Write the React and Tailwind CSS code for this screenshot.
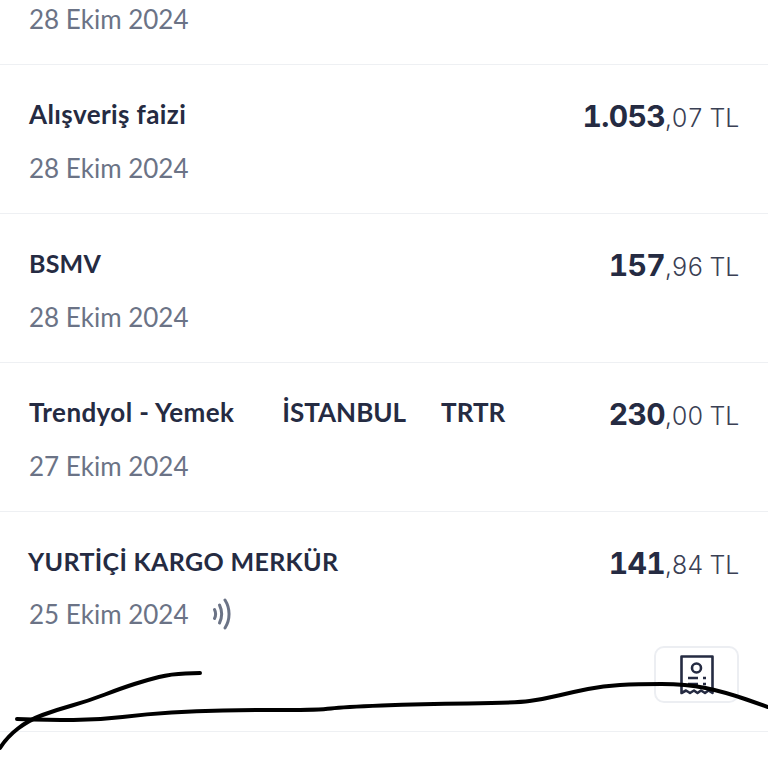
import React from "react";

const rows = [
  { title: "Alışveriş faizi", date: "28 Ekim 2024", whole: "1.053", cents: ",07 TL" },
  { title: "BSMV", date: "28 Ekim 2024", whole: "157", cents: ",96 TL" },
  { title: "Trendyol - Yemek", extra: ["İSTANBUL", "TRTR"], date: "27 Ekim 2024", whole: "230", cents: ",00 TL" },
];

const scribbleA = [[0, 748], [7, 737], [29, 720], [56, 710], [88, 701], [122, 688], [147, 680], [171, 674], [200, 673]];
const scribbleB = [[17, 719], [49, 720], [98, 720], [147, 714], [196, 711], [250, 710], [319, 710], [343, 707], [421, 704], [515, 703], [544, 699], [573, 692], [603, 686], [637, 684], [686, 684], [725, 692], [768, 707]];

// smooth a list of points with quadratic segments through the midpoints
function smooth(points) {
  let d = `M${points[0][0]} ${points[0][1]}`;
  for (let i = 1; i < points.length - 1; i++) {
    const mx = (points[i][0] + points[i + 1][0]) / 2;
    const my = (points[i][1] + points[i + 1][1]) / 2;
    d += `Q${points[i][0]} ${points[i][1]} ${mx} ${my}`;
  }
  const last = points[points.length - 1];
  return `${d}L${last[0]} ${last[1]}`;
}

function Amount({ whole, cents }) {
  return (
    <div className="flex items-baseline text-[#252b42] font-['Inter',sans-serif] tabular-nums">
      <span className="text-[30px] font-bold leading-[38px] tracking-[-0.6px]">{whole}</span>
      <span className="text-[25px] leading-[38px] text-[#3a4054] font-light tracking-[-0.3px]">{cents}</span>
    </div>
  );
}

function Row({ row }) {
  const lower = row.title !== "BSMV";
  return (
    <div className="h-[149px] border-b border-[#eef0f3] px-[29px] pt-[30px] flex justify-between">
      <div>
        <div className="h-[38px] flex items-center font-bold text-[#252b42] leading-none text-[26px]">
          <span className={lower ? "tracking-[0.4px]" : "text-[25px] tracking-[0.2px]"}>{row.title}</span>
          {row.extra && <span className="ml-[48px]">{row.extra[0]}</span>}
          {row.extra && <span className="ml-[35px]">{row.extra[1]}</span>}
        </div>
        <div className="mt-[16px] text-[26px] text-[#6b7386] leading-[38px]">{row.date}</div>
      </div>
      <div className="pt-[2px]">
        <Amount whole={row.whole} cents={row.cents} />
      </div>
    </div>
  );
}

export default function App() {
  return (
    <div className="relative w-[768px] h-[768px] overflow-hidden bg-white font-['Lato','Noto_Sans',sans-serif]">
      <div className="h-[65px] border-b border-[#eef0f3] pl-[29px]">
        <div className="text-[26px] text-[#6b7386] leading-[38px]">28 Ekim 2024</div>
      </div>

      {rows.map((row) => (
        <Row key={row.whole} row={row} />
      ))}

      <div className="h-[220px] border-b border-[#eef0f3] pl-[28px] pr-[29px] pt-[30px]">
        <div className="flex justify-between">
          <div className="h-[38px] flex items-center text-[25px] font-bold text-[#252b42] leading-none tracking-[0.35px]">
            YURTİÇİ KARGO MERKÜR
          </div>
          <div className="pt-[2px]">
            <Amount whole="141" cents=",84 TL" />
          </div>
        </div>
        <div className="mt-[11px] h-[38px] flex items-center">
          <span className="text-[26px] text-[#6b7386] leading-[38px] ml-[1px]">25 Ekim 2024</span>
          <svg width="20" height="32" viewBox="0 0 20 32" fill="none" stroke="#6b7386" strokeWidth="3" strokeLinecap="round" className="ml-[23px]">
            <path d="M2.5 11.5c1.5 3 1.5 6 0 9" />
            <path d="M7.5 7c2.8 5.8 2.8 12.200 0 18" />
            <path d="M13 2c5.400 8.500 5.400 19.500 0 28" />
          </svg>
        </div>
        <div className="flex justify-end mt-[13px]">
          <button className="w-[85px] h-[57px] rounded-[10px] border-2 border-[#eceef2] bg-white flex items-center justify-center">
            <svg width="34" height="40" viewBox="0 0 34 40" fill="none" stroke="#252b42" strokeWidth="2.6">
              <path d="M1.5 38V1.5h31V38l-4-2.500-3.500 2.500-4-2.500-3.500 2.500-3.500-2.500-4 2.500-4-2.500z" strokeLinejoin="round" />
              <circle cx="16.500" cy="13" r="4.500" />
              <path d="M8 23h10M23 23h3M8 29h10M23 29h3" />
            </svg>
          </button>
        </div>
      </div>

      {/* pen scribble over the screenshot */}
      <svg className="absolute inset-0 pointer-events-none" width="768" height="768" viewBox="0 0 768 768" fill="none" stroke="#000" strokeWidth="4" strokeLinecap="round" strokeLinejoin="round">
        <path d={smooth(scribbleA)} />
        <path d={smooth(scribbleB)} />
      </svg>
    </div>
  );
}
